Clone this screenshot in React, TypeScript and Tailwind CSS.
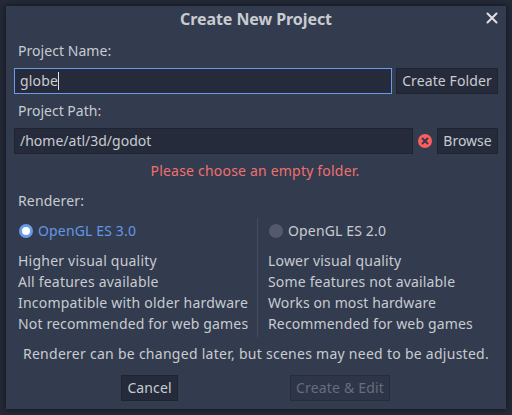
import React from "react";

const field = "flex h-[26px] items-center border bg-[#262b3b] px-[5px]";
const button = "flex h-[26px] shrink-0 items-center justify-center border";

type Feature = [text: string, tracking: string];

function Renderer({ name, selected, features }: { name: string; selected?: boolean; features: Feature[] }) {
  return (
    <div>
      <div className="flex h-[26px] items-center">
        <svg width="16" height="16" viewBox="0 0 16 16" className="mr-1">
          <circle cx="8" cy="8" r="7" fill={selected ? "#699ce8" : "#545a6b"} />
          {selected && <circle cx="8" cy="8" r="4" fill="#fff" />}
        </svg>
        <span className={`tracking-[0.15px] ${selected ? "text-[#6397e4]" : ""}`}>{name}</span>
      </div>
      <div className="mt-[6px] leading-[21px]">
        {features.map(([text, tracking]) => (
          <div key={text} className={tracking}>
            {text}
          </div>
        ))}
      </div>
    </div>
  );
}

export default function App() {
  return (
    <div className="h-[415px] w-[512px] overflow-hidden bg-[#252a39] p-1.5 font-['Noto_Sans',sans-serif] text-[14px] leading-5 whitespace-nowrap text-[#c8cbd0]">
      <div className="flex h-[403px] w-[500px] flex-col bg-[#333b4f] px-2 shadow-[0_0_6px_1px_rgba(0,0,0,0.45)]">
        <div className="flex h-[26px] items-center">
          <div className="w-[18px]" />
          <h1 className="flex-1 pb-px text-center text-[16px] font-bold tracking-[-0.08px]">Create New Project</h1>
          <svg width="24" height="24" viewBox="0 0 24 24" className="-mr-1.5">
            <path d="M7.5 6.5l9 9M16.5 6.5l-9 9" stroke="#e0e0e0" strokeWidth="2" strokeLinecap="round" />
          </svg>
        </div>
        <div className="mt-[9px] pl-1 tracking-[0.05px]">Project Name:</div>
        <div className="mt-[7px] flex gap-1">
          <div className={`${field} w-[378px] border-[#699ce8] tracking-[0.2px]`}>
            globe
            <span className="h-[18px] w-px bg-[#e0e0e0]" />
          </div>
          <button className={`${button} w-[102px] border-[#202431] bg-[#262b3b] tracking-[0.1px]`}>Create Folder</button>
        </div>
        <div className="mt-[7px] pl-1">Project Path:</div>
        <div className="mt-[7px] flex items-center gap-1">
          <div className={`${field} w-[399px] border-[#202431]`}>/home/atl/3d/godot</div>
          <svg width="16" height="16" viewBox="0 0 16 16">
            <circle cx="8" cy="8" r="7" fill="#ff5d5d" />
            <path d="M5 5l6 6M11 5l-6 6" stroke="#333b4f" strokeWidth="2" />
          </svg>
          <button className={`${button} w-[61px] border-[#202431] bg-[#262b3b]`}>Browse</button>
        </div>
        <div className="mt-[7px] pr-0.5 text-center tracking-[0.2px] text-[#f0706f]">Please choose an empty folder.</div>
        <div className="mt-[10px] pl-1 tracking-[0.15px]">Renderer:</div>
        <div className="mt-[7px] flex pl-1">
          <div className="w-[239px]">
            <Renderer
              name="OpenGL ES 3.0"
              selected
              features={[
                ["Higher visual quality", "tracking-[0.22px]"],
                ["All features available", "tracking-[0.22px]"],
                ["Incompatible with older hardware", "tracking-[0.21px]"],
                ["Not recommended for web games", "tracking-[0.15px]"],
              ]}
            />
          </div>
          <div className="mr-[10px] h-[119px] w-px bg-[#454c5e]" />
          <Renderer
            name="OpenGL ES 2.0"
            features={[
              ["Lower visual quality", "tracking-[0.19px]"],
              ["Some features not available", "tracking-[0.17px]"],
              ["Works on most hardware", "tracking-[0.12px]"],
              ["Recommended for web games", "tracking-[0.14px]"],
            ]}
          />
        </div>
        <div className="mt-[7px] text-center tracking-[0.27px]">
          Renderer can be changed later, but scenes may need to be adjusted.
        </div>
        <div className="mt-[11px] flex pl-[107px]">
          <button className={`${button} w-[57px] border-[#202431] bg-[#262b3b] tracking-[0.1px]`}>Cancel</button>
          <button className={`${button} ml-[112px] w-[100px] border-[#252c3c] bg-[#2f3549] tracking-[0.18px] text-[#666d7c]`}>
            Create &amp; Edit
          </button>
        </div>
      </div>
    </div>
  );
}
